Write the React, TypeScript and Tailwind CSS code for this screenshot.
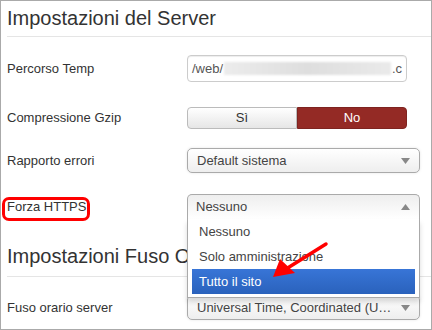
import React from 'react';

const font = "font-['Liberation_Sans',Arial,sans-serif]";

function Arrow({ up = false }: { up?: boolean }) {
  return (
    <svg width="9" height="6" viewBox="0 0 9 6" className="shrink-0">
      {up ? <polygon points="0,6 9,6 4.5,0" fill="#888" /> : <polygon points="0,0 9,0 4.5,6" fill="#888" />}
    </svg>
  );
}

function Row({ label, mt, children }: { label: React.ReactNode; mt: string; children: React.ReactNode }) {
  return (
    <div className={`flex items-center ${mt}`}>
      <div className="w-[180px] shrink-0 text-[13px] text-[#333]">{label}</div>
      {children}
    </div>
  );
}

function ChosenSelect({ text }: { text: string }) {
  return (
    <div className="w-[233px] h-[25px] flex items-center justify-between pl-[9px] pr-[9px] rounded-[5px] border border-[#aaa] bg-gradient-to-b from-white to-[#eee] shadow-[0_0_3px_rgba(0,0,0,0.1)] text-[13px] text-[#444]">
      <span className="truncate">{text}</span>
      <Arrow />
    </div>
  );
}

export default function App() {
  return (
    <div className={`relative w-[432px] h-[330px] overflow-hidden bg-white border border-[#aaa] ${font}`}>
      <div className="pl-[6px]">
        {/* Server settings */}
        <div className="pt-[3px] pb-[4px] border-b border-[#e5e5e5]">
          <h2 className="text-[20px] leading-[28px] text-[#333]">Impostazioni del Server</h2>
        </div>

        <Row label="Percorso Temp" mt="mt-[18px]">
          <div className="w-[220px] h-[27px] flex items-center pl-[4px] pr-[4px] rounded-[4px] border border-[#ccc] shadow-[inset_0_1px_1px_rgba(0,0,0,0.075)] text-[13px] text-[#555]">
            <span>/web/</span>
            <div className="flex-1 h-[13px] mx-[1px] bg-gradient-to-r from-[#ececec] via-[#dedede] to-[#eaeaea] blur-[1px]" />
            <span>.c</span>
          </div>
        </Row>

        <Row label="Compressione Gzip" mt="mt-[25px]">
          <div className="flex h-[22px] text-[13px]">
            <div className="w-[110px] flex items-center justify-center rounded-l-[4px] border border-[#bbb] bg-gradient-to-b from-white to-[#e6e6e6] text-[#333]">
              Sì
            </div>
            <div className="w-[110px] flex items-center justify-center rounded-r-[4px] border border-[#7e2420] bg-[#942a25] text-white">
              No
            </div>
          </div>
        </Row>

        <Row label="Rapporto errori" mt="mt-[19px]">
          <ChosenSelect text="Default sistema" />
        </Row>

        <Row
          label={
            <span className="relative">
              Forza HTTPS
              <span className="absolute left-[-5px] right-[-4px] top-[-2px] bottom-[-7px] border-[3px] border-[#f00] rounded-[7px]" />
            </span>
          }
          mt="mt-[21px]"
        >
          <div className="w-[233px] h-[25px] flex items-center justify-between pl-[8px] pr-[9px] rounded-t-[5px] border border-[#aaa] border-b-0 bg-gradient-to-b from-[#eee] to-white text-[13px] text-[#444]">
            <span>Nessuno</span>
            <Arrow up />
          </div>
        </Row>

        {/* Timezone settings, heading partly hidden under the open list */}
        <div className="pt-[23px] pb-[6px] border-b border-[#e5e5e5]">
          <h2 className="w-[180px] overflow-hidden whitespace-nowrap text-[20px] leading-[28px] text-[#333]">
            Impostazioni Fuso Orario
          </h2>
        </div>

        <Row label="Fuso orario server" mt="mt-[18px]">
          <ChosenSelect text="Universal Time, Coordinated (U…" />
        </Row>
      </div>

      {/* open dropdown list */}
      <div className="absolute left-[186px] top-[218px] w-[233px] h-[79px] bg-white border border-[#aaa] border-t-0 shadow-[0_4px_5px_rgba(0,0,0,0.15)] px-[4px] text-[13px] text-[#444]">
        <div className="h-[25px] flex items-center pl-[7px]">Nessuno</div>
        <div className="h-[25px] flex items-center pl-[7px]">Solo amministrazione</div>
        <div className="h-[25px] flex items-center pl-[7px] text-white bg-gradient-to-b from-[#3875d7] to-[#2a62bc]">
          Tutto il sito
        </div>
      </div>

      {/* red annotation arrow */}
      <svg className="absolute left-0 top-0 pointer-events-none" width="432" height="330">
        <line x1="325" y1="243" x2="285" y2="268" stroke="#f00" strokeWidth="3.5" strokeLinecap="round" />
        <polygon points="272,276 279,258 294,272" fill="#f00" />
      </svg>
    </div>
  );
}
